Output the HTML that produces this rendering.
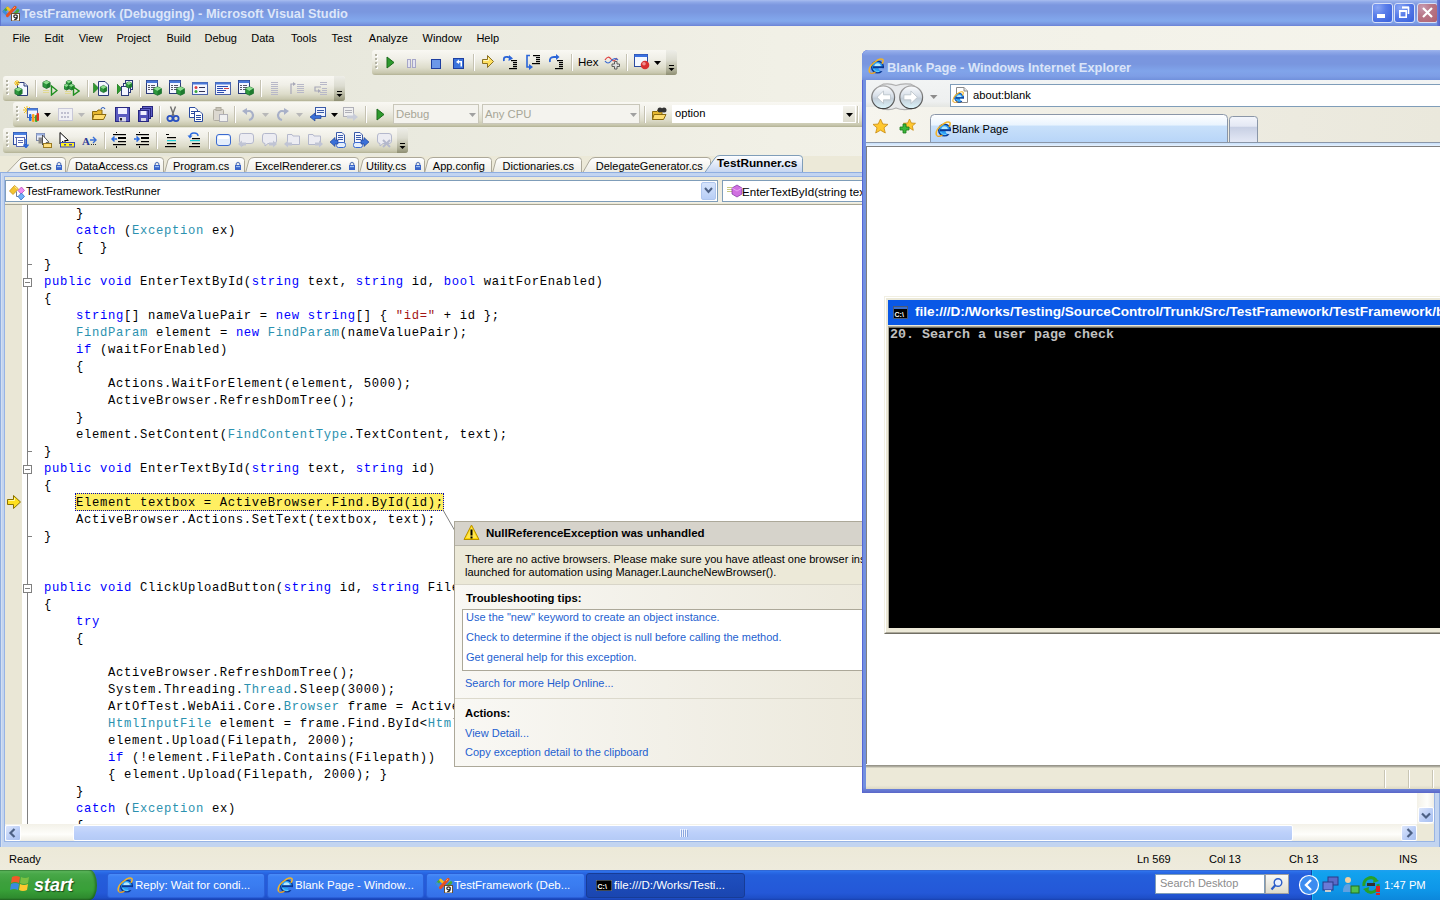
<!DOCTYPE html><html><head><meta charset="utf-8"><style>
*{box-sizing:border-box}
html,body{margin:0;padding:0}
body{width:1440px;height:900px;overflow:hidden;position:relative;background:#ECE9D8;font-family:"Liberation Sans",sans-serif;font-size:11px;color:#000}
.a{position:absolute}
.t{position:absolute;white-space:pre;line-height:1}
.k{color:#0000FF}.y{color:#2B91AF}.s{color:#A31515}
.tb{position:absolute;border-radius:3px;background:linear-gradient(#F9F8F3 0%,#F0EFE7 35%,#DDDCCA 72%,#C8C7AE 92%,#B2B194 100%)}
.grip{position:absolute;width:2px;height:15px;background:repeating-linear-gradient(#B4B3A4 0 2px,transparent 2px 4px);filter:drop-shadow(1px 1px 0 #fff)}
.code{position:absolute;white-space:pre;line-height:17px;font-family:"Liberation Mono",monospace;font-size:12.2px;letter-spacing:0.68px;color:#000}
.tab{position:absolute;font-size:11px;white-space:pre}
</style></head><body>
<div class="a" style="left:0px;top:0px;width:1440px;height:26px;background:linear-gradient(#A9BDEF 0px,#90A9E8 2px,#7C97DF 5px,#7A97DF 12px,#80A3E9 18px,#82A8EC 21px,#7896E0 24px,#6A82D6 26px)"></div>
<div class="a" style="left:0px;top:0px;width:1px;height:26px;background:#6079D2"></div>
<svg class="a" style="left:2px;top:3px;" width="18" height="18" viewBox="0 0 18 18"><g stroke-width="2.6" stroke-linecap="round" fill="none"><path d="M2 8.5 L5.5 5" stroke="#48A838"/><path d="M5.5 5 L9 8.5" stroke="#F8C020"/><path d="M2 8.5 L5.5 12" stroke="#3A8EE0"/><path d="M12.5 4 L16 7.5" stroke="#3AA0E8"/><path d="M16 7.5 L12.5 11" stroke="#48A838"/><path d="M5.5 12.5 L13 4.5" stroke="#E85020" stroke-width="3.2"/></g><path d="M11 6 L13 4" stroke="#FFA060" stroke-width="1"/><rect x="9.5" y="10.5" width="8" height="7.5" fill="#FFFFFF" stroke="#6A5030"/><path d="M15.2 13.3 Q15.2 11.8 13.5 11.8 Q11.8 11.8 11.8 13.3 Q11.8 14.8 13.5 14.8 Q14.6 14.8 15.2 14 Q15.2 16.8 12.2 16.6" stroke="#2A2A2A" stroke-width="1.3" fill="none"/></svg>
<div class="t" style="left:22px;top:7.5px;font-size:12.8px;font-weight:bold;color:#DDE6F9;letter-spacing:0px">TestFramework (Debugging) - Microsoft Visual Studio</div>
<div class="a" style="left:1372px;top:3px;width:21px;height:20px;border-radius:3px;border:1px solid #D8E0F8;background:radial-gradient(circle at 25% 20%,#8AA6F4 0,#5A7EEA 40%,#3F66DE 85%,#4A78E8 100%)"></div>
<div class="a" style="left:1377px;top:14px;width:8px;height:4px;background:#fff"></div>
<div class="a" style="left:1394px;top:3px;width:21px;height:20px;border-radius:3px;border:1px solid #D8E0F8;background:radial-gradient(circle at 25% 20%,#8AA6F4 0,#5A7EEA 40%,#3F66DE 85%,#4A78E8 100%)"></div>
<svg class="a" style="left:1398px;top:6px;" width="13" height="13" viewBox="0 0 13 13"><path d="M4 1.5 H10.5 V8" stroke="#fff" stroke-width="1.6" fill="none"/><rect x="4" y="0.5" width="7" height="2" fill="#fff"/><rect x="1.8" y="4.8" width="6.4" height="6.4" fill="none" stroke="#fff" stroke-width="1.6"/><rect x="1" y="4" width="8" height="2" fill="#fff"/></svg>
<div class="a" style="left:1417px;top:3px;width:21px;height:20px;border-radius:3px;border:1px solid #D8E0F8;background:radial-gradient(circle at 25% 20%,#C89AB0 0,#B87888 40%,#B06070 100%)"></div>
<svg class="a" style="left:1421px;top:6px;" width="13" height="13" viewBox="0 0 13 13"><path d="M2 2 L11 11 M11 2 L2 11" stroke="#fff" stroke-width="2.2"/></svg>
<div class="a" style="left:1437px;top:0px;width:3px;height:26px;background:linear-gradient(90deg,#6A7ED8,#5060C8)"></div>
<div class="a" style="left:0px;top:26px;width:1440px;height:130px;background:linear-gradient(90deg,#E2E2D5 0%,#E9E9DE 26%,#F1F0E6 54%,#F5F4EC 100%)"></div>
<div class="t" style="left:12.5px;top:33px;font-size:11px">File</div>
<div class="t" style="left:44.6px;top:33px;font-size:11px">Edit</div>
<div class="t" style="left:78.7px;top:33px;font-size:11px">View</div>
<div class="t" style="left:116.4px;top:33px;font-size:11px">Project</div>
<div class="t" style="left:166.4px;top:33px;font-size:11px">Build</div>
<div class="t" style="left:204.5px;top:33px;font-size:11px">Debug</div>
<div class="t" style="left:251.2px;top:33px;font-size:11px">Data</div>
<div class="t" style="left:291px;top:33px;font-size:11px">Tools</div>
<div class="t" style="left:331.6px;top:33px;font-size:11px">Test</div>
<div class="t" style="left:368.8px;top:33px;font-size:11px">Analyze</div>
<div class="t" style="left:422.6px;top:33px;font-size:11px">Window</div>
<div class="t" style="left:476.4px;top:33px;font-size:11px">Help</div>
<div class="tb" style="left:372px;top:50px;width:305px;height:25px"></div>
<div class="grip" style="left:375px;top:54px"></div>
<div class="a" style="left:666px;top:50px;width:11px;height:25px;border-radius:0 3px 3px 0;background:linear-gradient(#EDEDE7,#DCDCD0 40%,#B0B098 80%,#8E8E72)"></div>
<svg class="a" style="left:668px;top:65px" width="7" height="7"><rect x="1" y="0" width="5" height="1" fill="#000"/><path d="M0.5 3 H6.5 L3.5 6Z" fill="#000"/></svg>
<svg class="a" style="left:382px;top:54px" width="16" height="16" viewBox="0 0 16 16"><path d="M5 3 L12 8.5 L5 14 Z" fill="#2E9A2E" stroke="#1B6B1B" stroke-width="1"/></svg>
<svg class="a" style="left:404px;top:54px" width="16" height="16" viewBox="0 0 16 16"><rect x="3.5" y="5.5" width="3" height="8" fill="#E4E4F0" stroke="#A6A6C8"/><rect x="8.5" y="5.5" width="3" height="8" fill="#E4E4F0" stroke="#A6A6C8"/></svg>
<svg class="a" style="left:428px;top:54px" width="16" height="16" viewBox="0 0 16 16"><rect x="3.5" y="5.5" width="9" height="9" fill="#6C98E8" stroke="#1E3FA0"/></svg>
<svg class="a" style="left:451px;top:54px" width="16" height="16" viewBox="0 0 16 16"><rect x="2.5" y="4.5" width="10" height="10" fill="#3C74DC" stroke="#1E3FA0"/><path d="M5 8 L8 5.5 L8 7 L11 7 L11 12.5 L9.5 12.5 L9.5 8.5 L8 8.5 L8 10 Z" fill="#fff"/></svg>
<div class="a" style="left:473px;top:54px;width:1px;height:17px;background:#C5C2B2"></div>
<div class="a" style="left:474px;top:54px;width:1px;height:17px;background:#FFFFFF"></div>
<svg class="a" style="left:480px;top:54px" width="16" height="16" viewBox="0 0 16 16"><path d="M2.5 5.5 H7.5 V1.5 L13.5 7.5 L7.5 13.5 V9.5 H2.5Z" fill="#FFE060" stroke="#8A7020"/><path d="M3.5 6.5 H8.5 V4" stroke="#FFF8C0" fill="none"/></svg>
<svg class="a" style="left:502px;top:54px" width="16" height="16" viewBox="0 0 16 16"><path d="M2 7 Q1 2 6 3 L9 4" stroke="#2A64D8" stroke-width="1.8" fill="none"/><path d="M7 1 L11 4.5 L6.5 7Z" fill="#2A64D8"/><g fill="#000"><rect x="9" y="6" width="6" height="1.2"/><rect x="11" y="8" width="4" height="1.2"/><rect x="11" y="10" width="4" height="1.2"/><rect x="11" y="12" width="4" height="1.2"/><rect x="7" y="14" width="8" height="1.2"/></g></svg>
<svg class="a" style="left:525px;top:54px" width="16" height="16" viewBox="0 0 16 16"><path d="M5 1.5 H2 V13 H5" stroke="#2A64D8" stroke-width="1.6" fill="none"/><path d="M4 10 L8 13 L4 16Z" fill="#2A64D8"/><g fill="#000"><rect x="8" y="1" width="7" height="1.2"/><rect x="11" y="3" width="4" height="1.2"/><rect x="11" y="5" width="4" height="1.2"/><rect x="11" y="7" width="4" height="1.2"/><rect x="7" y="9" width="8" height="1.2"/></g></svg>
<svg class="a" style="left:548px;top:54px" width="16" height="16" viewBox="0 0 16 16"><path d="M2 8 Q1 3 6 3 H9" stroke="#2A64D8" stroke-width="1.8" fill="none"/><path d="M8 0 L11.5 3 L8 6Z" fill="#2A64D8"/><g fill="#000"><rect x="9" y="6" width="6" height="1.2"/><rect x="11" y="8" width="4" height="1.2"/><rect x="11" y="10" width="4" height="1.2"/><rect x="11" y="12" width="4" height="1.2"/><rect x="7" y="14" width="8" height="1.2"/></g></svg>
<div class="a" style="left:571px;top:54px;width:1px;height:17px;background:#C5C2B2"></div>
<div class="a" style="left:572px;top:54px;width:1px;height:17px;background:#FFFFFF"></div>
<div class="t" style="left:578px;top:57px;font-size:11.5px">Hex</div>
<svg class="a" style="left:604px;top:54px" width="16" height="16" viewBox="0 0 16 16"><path d="M1 6 Q4 1 7 5 Q10 9 13 4" stroke="#E04040" stroke-width="1.2" fill="none"/><path d="M1 7 Q4 11 7 7 Q10 3 14 6" stroke="#3A6AD0" stroke-width="1.2" fill="none"/><path d="M8 10 h2.5 v-2.5 h2.5 v2.5 h2.5 v2.5 h-2.5 v2.5 h-2.5 v-2.5 h-2.5z" fill="#E0E0E0" stroke="#505050" stroke-width=".9"/></svg>
<div class="a" style="left:626px;top:54px;width:1px;height:17px;background:#C5C2B2"></div>
<div class="a" style="left:627px;top:54px;width:1px;height:17px;background:#FFFFFF"></div>
<svg class="a" style="left:634px;top:54px" width="16" height="16" viewBox="0 0 16 16"><rect x="0.5" y="0.5" width="13" height="12" fill="#F4F8FF" stroke="#2A4AA0"/><rect x="0.5" y="0.5" width="13" height="2.5" fill="#3A70E0"/><circle cx="11" cy="11" r="4.3" fill="#D83030"/><circle cx="10" cy="9.8" r="1.8" fill="#F09090"/></svg>
<svg class="a" style="left:654px;top:61px" width="7" height="4"><path d="M0 0 H7 L3.5 4Z" fill="#000"/></svg>
<div class="tb" style="left:3px;top:76px;width:342px;height:25px"></div>
<div class="grip" style="left:6px;top:80px"></div>
<div class="a" style="left:334px;top:76px;width:11px;height:25px;border-radius:0 3px 3px 0;background:linear-gradient(#EDEDE7,#DCDCD0 40%,#B0B098 80%,#8E8E72)"></div>
<svg class="a" style="left:336px;top:91px" width="7" height="7"><rect x="1" y="0" width="5" height="1" fill="#000"/><path d="M0.5 3 H6.5 L3.5 6Z" fill="#000"/></svg>
<svg class="a" style="left:13px;top:80px" width="16" height="16" viewBox="0 0 16 16"><path d="M4.5 2.5 H11 L14.5 6 V15.5 H4.5 Z" fill="#F4F8FF" stroke="#2A3A78"/><path d="M11 2.5 V6 H14.5" fill="#DDE6F8" stroke="#2A3A78"/><g stroke="#F0C020" stroke-width="1"><path d="M4 0 V6 M1 3 H7 M2 1 L6 5 M6 1 L2 5"/></g><polygon points="5.5,7.5 9.1,9.3 9.1,13.7 5.5,15.5 1.9,13.7 1.9,9.3" fill="#2E9A3E" stroke="#17602A" stroke-width=".7"/><polygon points="1.9,9.3 5.5,7.5 9.1,9.3 5.5,11.5" fill="#8EDC8E"/><polygon points="5.5,11.5 9.1,9.3 9.1,13.7 5.5,15.5" fill="#1E7A2E"/></svg>
<div class="a" style="left:35px;top:80px;width:1px;height:17px;background:#C5C2B2"></div>
<div class="a" style="left:36px;top:80px;width:1px;height:17px;background:#FFFFFF"></div>
<svg class="a" style="left:42px;top:80px" width="16" height="16" viewBox="0 0 16 16"><polygon points="4.5,0.5 8.1,2.3 8.1,6.7 4.5,8.5 0.9,6.7 0.9,2.3" fill="#2E9A3E" stroke="#17602A" stroke-width=".7"/><polygon points="0.9,2.3 4.5,0.5 8.1,2.3 4.5,4.5" fill="#8EDC8E"/><polygon points="4.5,4.5 8.1,2.3 8.1,6.7 4.5,8.5" fill="#1E7A2E"/><g fill="#E0D890"><rect x="1" y="10" width="6" height="1"/><rect x="1" y="12" width="6" height="1"/></g><path d="M9.5 6 L15 10.5 L9.5 15Z" fill="none" stroke="#1F8F1F" stroke-width="1.4"/></svg>
<svg class="a" style="left:64px;top:80px" width="16" height="16" viewBox="0 0 16 16"><polygon points="5.0,0.2 7.7,1.6 7.7,4.9 5.0,6.2 2.3,4.9 2.3,1.6" fill="#2E9A3E" stroke="#17602A" stroke-width=".7"/><polygon points="2.3,1.6 5.0,0.2 7.7,1.6 5.0,3.2" fill="#8EDC8E"/><polygon points="5.0,3.2 7.7,1.6 7.7,4.9 5.0,6.2" fill="#1E7A2E"/><polygon points="2.5,4.0 5.2,5.3 5.2,8.7 2.5,10.0 -0.2,8.7 -0.2,5.3" fill="#2E9A3E" stroke="#17602A" stroke-width=".7"/><polygon points="-0.2,5.3 2.5,4.0 5.2,5.3 2.5,7.0" fill="#8EDC8E"/><polygon points="2.5,7.0 5.2,5.3 5.2,8.7 2.5,10.0" fill="#1E7A2E"/><polygon points="7.5,4.0 10.2,5.3 10.2,8.7 7.5,10.0 4.8,8.7 4.8,5.3" fill="#2E9A3E" stroke="#17602A" stroke-width=".7"/><polygon points="4.8,5.3 7.5,4.0 10.2,5.3 7.5,7.0" fill="#8EDC8E"/><polygon points="7.5,7.0 10.2,5.3 10.2,8.7 7.5,10.0" fill="#1E7A2E"/><g fill="#E0D890"><rect x="1" y="11" width="6" height="1"/><rect x="1" y="13" width="6" height="1"/></g><path d="M9.5 7 L15 11 L9.5 15Z" fill="none" stroke="#1F8F1F" stroke-width="1.4"/></svg>
<div class="a" style="left:87px;top:80px;width:1px;height:17px;background:#C5C2B2"></div>
<div class="a" style="left:88px;top:80px;width:1px;height:17px;background:#FFFFFF"></div>
<svg class="a" style="left:93px;top:80px" width="16" height="16" viewBox="0 0 16 16"><path d="M0.5 3 L5.5 8 L0.5 13Z" fill="#2E9A2E" stroke="#1B6B1B" stroke-width=".6"/><path d="M5.5 1.5 H12 L15.5 5 V15.5 H5.5Z" fill="#F4F6FF" stroke="#2A3A78"/><polygon points="10.5,5.4 13.7,7.0 13.7,11.0 10.5,12.6 7.3,11.0 7.3,7.0" fill="#2E9A3E" stroke="#17602A" stroke-width=".7"/><polygon points="7.3,7.0 10.5,5.4 13.7,7.0 10.5,9.0" fill="#8EDC8E"/><polygon points="10.5,9.0 13.7,7.0 13.7,11.0 10.5,12.6" fill="#1E7A2E"/></svg>
<svg class="a" style="left:117px;top:80px" width="16" height="16" viewBox="0 0 16 16"><path d="M0 4 L5 9 L0 14Z" fill="#2E9A2E" stroke="#1B6B1B" stroke-width=".6"/><rect x="8.5" y="0.5" width="7" height="9" fill="#F4F6FF" stroke="#2A3A78"/><rect x="6.5" y="3.5" width="7" height="9" fill="#F4F6FF" stroke="#2A3A78"/><rect x="4.5" y="6.5" width="7" height="9" fill="#F4F6FF" stroke="#2A3A78"/><polygon points="12.0,1.8 14.9,3.2 14.9,6.8 12.0,8.2 9.1,6.8 9.1,3.2" fill="#2E9A3E" stroke="#17602A" stroke-width=".7"/><polygon points="9.1,3.2 12.0,1.8 14.9,3.2 12.0,5.0" fill="#8EDC8E"/><polygon points="12.0,5.0 14.9,3.2 14.9,6.8 12.0,8.2" fill="#1E7A2E"/></svg>
<div class="a" style="left:139px;top:80px;width:1px;height:17px;background:#C5C2B2"></div>
<div class="a" style="left:140px;top:80px;width:1px;height:17px;background:#FFFFFF"></div>
<svg class="a" style="left:146px;top:80px" width="16" height="16" viewBox="0 0 16 16"><rect x="0.5" y="0.5" width="11" height="13" fill="#F4F6FF" stroke="#2A3A78"/><rect x="0.5" y="0.5" width="11" height="2.5" fill="#4A78D8"/><g fill="#556"><rect x="2" y="5" width="2" height="1"/><rect x="5" y="5" width="4" height="1"/><rect x="2" y="7" width="2" height="1"/><rect x="5" y="7" width="4" height="1"/><rect x="2" y="9" width="2" height="1"/><rect x="5" y="9" width="3" height="1"/></g><polygon points="11.5,6.7 15.4,8.6 15.4,13.4 11.5,15.3 7.6,13.4 7.6,8.6" fill="#2E9A3E" stroke="#17602A" stroke-width=".7"/><polygon points="7.6,8.6 11.5,6.7 15.4,8.6 11.5,11.0" fill="#8EDC8E"/><polygon points="11.5,11.0 15.4,8.6 15.4,13.4 11.5,15.3" fill="#1E7A2E"/></svg>
<svg class="a" style="left:169px;top:80px" width="16" height="16" viewBox="0 0 16 16"><rect x="0.5" y="0.5" width="11" height="13" fill="#F4F6FF" stroke="#2A3A78"/><rect x="0.5" y="0.5" width="11" height="2.5" fill="#4A78D8"/><g fill="#556"><rect x="2" y="5" width="2" height="1"/><rect x="5" y="5" width="4" height="1"/><rect x="2" y="7" width="2" height="1"/><rect x="5" y="7" width="4" height="1"/><rect x="2" y="9" width="2" height="1"/><rect x="5" y="9" width="3" height="1"/></g><polygon points="11.5,6.7 15.4,8.6 15.4,13.4 11.5,15.3 7.6,13.4 7.6,8.6" fill="#2E9A3E" stroke="#17602A" stroke-width=".7"/><polygon points="7.6,8.6 11.5,6.7 15.4,8.6 11.5,11.0" fill="#8EDC8E"/><polygon points="11.5,11.0 15.4,8.6 15.4,13.4 11.5,15.3" fill="#1E7A2E"/></svg>
<svg class="a" style="left:192px;top:80px" width="16" height="16" viewBox="0 0 16 16"><rect x="0.5" y="2.5" width="15" height="12" fill="#F4F6FF" stroke="#4A62A8"/><rect x="0.5" y="2.5" width="15" height="2" fill="#4A78D8"/><circle cx="4" cy="7.5" r="1.5" fill="#E04040"/><circle cx="4" cy="11.5" r="1.5" fill="#3DAA3D"/><rect x="7" y="7" width="6" height="1" fill="#335"/><rect x="7" y="11" width="6" height="1" fill="#335"/></svg>
<svg class="a" style="left:215px;top:80px" width="16" height="16" viewBox="0 0 16 16"><rect x="0.5" y="2.5" width="15" height="12" fill="#F4F6FF" stroke="#4A62A8"/><rect x="0.5" y="2.5" width="15" height="2" fill="#4A78D8"/><g fill="#2A4AB0"><rect x="2" y="6" width="11" height="1"/><rect x="2" y="8" width="6" height="1"/><rect x="9" y="8" width="5" height="1" fill="#D04040"/><rect x="2" y="10" width="9" height="1"/><rect x="2" y="12" width="7" height="1"/></g></svg>
<svg class="a" style="left:238px;top:80px" width="16" height="16" viewBox="0 0 16 16"><rect x="0.5" y="0.5" width="11" height="13" fill="#F4F6FF" stroke="#2A3A78"/><rect x="0.5" y="0.5" width="11" height="2.5" fill="#4A78D8"/><g fill="#556"><rect x="2" y="5" width="2" height="1"/><rect x="5" y="5" width="4" height="1"/><rect x="2" y="7" width="2" height="1"/><rect x="5" y="7" width="4" height="1"/><rect x="2" y="9" width="2" height="1"/><rect x="5" y="9" width="3" height="1"/></g><polygon points="11.5,6.7 15.4,8.6 15.4,13.4 11.5,15.3 7.6,13.4 7.6,8.6" fill="#2E9A3E" stroke="#17602A" stroke-width=".7"/><polygon points="7.6,8.6 11.5,6.7 15.4,8.6 11.5,11.0" fill="#8EDC8E"/><polygon points="11.5,11.0 15.4,8.6 15.4,13.4 11.5,15.3" fill="#1E7A2E"/></svg>
<div class="a" style="left:260px;top:80px;width:1px;height:17px;background:#C5C2B2"></div>
<div class="a" style="left:261px;top:80px;width:1px;height:17px;background:#FFFFFF"></div>
<svg class="a" style="left:267px;top:80px" width="16" height="16" viewBox="0 0 16 16"><g fill="#B8B8C8"><rect x="4" y="2" width="7" height="1"/><rect x="4" y="4" width="7" height="1"/><rect x="4" y="6" width="7" height="1"/><rect x="4" y="8" width="7" height="1"/><rect x="4" y="10" width="7" height="1"/><rect x="4" y="12" width="7" height="1"/><rect x="4" y="14" width="7" height="1"/></g></svg>
<svg class="a" style="left:289px;top:80px" width="16" height="16" viewBox="0 0 16 16"><path d="M2 14 V4 H5" stroke="#A8A8B8" stroke-width="1.2" fill="none"/><path d="M4 2 L7 4 L4 6" fill="#A8A8B8"/><g fill="#B8B8C8"><rect x="8" y="4" width="7" height="1"/><rect x="8" y="6" width="7" height="1"/><rect x="8" y="8" width="7" height="1"/><rect x="8" y="10" width="7" height="1"/><rect x="8" y="12" width="7" height="1"/></g></svg>
<svg class="a" style="left:312px;top:80px" width="16" height="16" viewBox="0 0 16 16"><path d="M9 7 H3 V11 H7" stroke="#A8A8B8" stroke-width="1.2" fill="none"/><path d="M6 9 L9 11 L6 13" fill="#A8A8B8"/><g fill="#B8B8C8"><rect x="8" y="2" width="7" height="1"/><rect x="8" y="4" width="7" height="1"/><rect x="10" y="8" width="5" height="1"/><rect x="10" y="10" width="5" height="1"/><rect x="8" y="12" width="7" height="1"/><rect x="8" y="14" width="7" height="1"/></g></svg>
<div class="tb" style="left:13px;top:102px;width:855px;height:25px;border-radius:3px 0 0 3px"></div>
<div class="grip" style="left:16px;top:106px"></div>
<svg class="a" style="left:23px;top:106px" width="16" height="16" viewBox="0 0 16 16"><g stroke="#F0C020" stroke-width="1"><path d="M4 0 V8 M0 4 H8 M1 1 L7 7 M7 1 L1 7"/></g><rect x="4.5" y="2.5" width="10" height="9" fill="#F0F4FF" stroke="#4A62A8"/><rect x="4.5" y="2.5" width="10" height="2" fill="#4A80E0"/><rect x="6" y="8" width="2.5" height="7" rx="1" fill="#2A70E0"/><rect x="9" y="8" width="2.5" height="8" rx="1" fill="#F8A020"/><rect x="12" y="9" width="2.5" height="7" rx="1" fill="#30B030"/><rect x="13.5" y="7" width="2.5" height="8" rx="1" fill="#E03020"/></svg>
<svg class="a" style="left:44px;top:113px" width="7" height="4"><path d="M0 0 H7 L3.5 4Z" fill="#000"/></svg>
<svg class="a" style="left:57px;top:106px" width="16" height="16" viewBox="0 0 16 16"><rect x="1.5" y="2.5" width="14" height="12" fill="#F0F0F4" stroke="#C8C8D8"/><g fill="#C0C0D0"><rect x="4" y="6" width="2" height="2"/><rect x="7" y="6" width="2" height="2"/><rect x="10" y="6" width="2" height="2"/><rect x="4" y="10" width="2" height="2"/><rect x="7" y="10" width="2" height="2"/><rect x="10" y="10" width="2" height="2"/></g></svg>
<svg class="a" style="left:78px;top:113px" width="7" height="4"><path d="M0 0 H7 L3.5 4Z" fill="#B8B8B8"/></svg>
<svg class="a" style="left:91px;top:106px" width="16" height="16" viewBox="0 0 16 16"><path d="M1.5 5.5 H6 L7 4 H11 V13.5 H1.5Z" fill="#E8B830" stroke="#8A6A10"/><path d="M3 8.5 H15 L12.5 13.5 H1.5Z" fill="#FFDD70" stroke="#8A6A10"/><path d="M10 3 Q12 0 14 3" stroke="#3060C0" stroke-width="1.2" fill="none"/></svg>
<svg class="a" style="left:114px;top:106px" width="16" height="16" viewBox="0 0 16 16"><rect x="1.5" y="1.5" width="14" height="14" fill="#5A5AC0" stroke="#282880"/><rect x="4" y="2" width="9" height="6" fill="#F0F0FF"/><rect x="5" y="11" width="7" height="4.5" fill="#D8D8E8"/><rect x="6" y="12" width="2" height="2.5" fill="#223"/></svg>
<svg class="a" style="left:137px;top:106px" width="16" height="16" viewBox="0 0 16 16"><rect x="5.5" y="0.5" width="10" height="10" fill="#6060C8" stroke="#282880"/><rect x="3.5" y="2.5" width="10" height="10" fill="#6060C8" stroke="#282880"/><rect x="1.5" y="4.5" width="10" height="11" fill="#5050B8" stroke="#282880"/><rect x="3.5" y="5" width="6" height="4" fill="#F0F0FF"/><rect x="4" y="12" width="5" height="3" fill="#D8D8E8"/></svg>
<div class="a" style="left:159px;top:106px;width:1px;height:17px;background:#C5C2B2"></div>
<div class="a" style="left:160px;top:106px;width:1px;height:17px;background:#FFFFFF"></div>
<svg class="a" style="left:165px;top:106px" width="16" height="16" viewBox="0 0 16 16"><path d="M5.5 0.5 L9 10 M10.5 0.5 L7 10" stroke="#707070" stroke-width="1.4"/><circle cx="5" cy="12.5" r="2.6" fill="none" stroke="#2850C0" stroke-width="1.8"/><circle cx="11" cy="12.5" r="2.6" fill="none" stroke="#2850C0" stroke-width="1.8"/></svg>
<svg class="a" style="left:188px;top:106px" width="16" height="16" viewBox="0 0 16 16"><path d="M1.5 1.5 H7 L9.5 4 V11.5 H1.5Z" fill="#fff" stroke="#2A4AA0"/><path d="M6.5 5.5 H12 L14.5 8 V15.5 H6.5Z" fill="#fff" stroke="#2A4AA0"/><g fill="#2A4AA0"><rect x="3" y="5" width="4" height="1"/><rect x="3" y="7" width="3" height="1"/><rect x="8" y="9" width="5" height="1"/><rect x="8" y="11" width="5" height="1"/><rect x="8" y="13" width="5" height="1"/></g></svg>
<svg class="a" style="left:212px;top:106px" width="16" height="16" viewBox="0 0 16 16"><rect x="1.5" y="3.5" width="10" height="11" rx="1" fill="#DCD8D0" stroke="#B0ACA0"/><rect x="4" y="1.5" width="5" height="3" fill="#C8C4B8" stroke="#B0ACA0"/><rect x="7.5" y="8.5" width="8" height="7" fill="#F0F0F0" stroke="#B0B0B8"/></svg>
<div class="a" style="left:234px;top:106px;width:1px;height:17px;background:#C5C2B2"></div>
<div class="a" style="left:235px;top:106px;width:1px;height:17px;background:#FFFFFF"></div>
<svg class="a" style="left:241px;top:106px" width="16" height="16" viewBox="0 0 16 16"><path d="M4 6 Q11 3 12 9 Q12 13 8 14" stroke="#A8B0C8" stroke-width="2.2" fill="none"/><path d="M1 5 L6 2 L6 9Z" fill="#A8B0C8"/></svg>
<svg class="a" style="left:262px;top:113px" width="7" height="4"><path d="M0 0 H7 L3.5 4Z" fill="#B8B8B8"/></svg>
<svg class="a" style="left:274px;top:106px" width="16" height="16" viewBox="0 0 16 16"><path d="M12 6 Q5 3 4 9 Q4 13 8 14" stroke="#A8B0C8" stroke-width="2.2" fill="none"/><path d="M15 5 L10 2 L10 9Z" fill="#A8B0C8"/></svg>
<svg class="a" style="left:296px;top:113px" width="7" height="4"><path d="M0 0 H7 L3.5 4Z" fill="#B8B8B8"/></svg>
<svg class="a" style="left:310px;top:106px" width="16" height="16" viewBox="0 0 16 16"><rect x="5.5" y="1.5" width="10" height="9" fill="#F0F4FF" stroke="#3A5AA8"/><g fill="#3A5AA8"><rect x="7" y="4" width="7" height="1"/><rect x="7" y="6" width="7" height="1"/></g><path d="M0 11 L5 7 L5 9.5 H11 V12.5 H5 V15Z" fill="#3A70D8" stroke="#1A3A90" stroke-width=".6"/></svg>
<svg class="a" style="left:331px;top:113px" width="7" height="4"><path d="M0 0 H7 L3.5 4Z" fill="#000"/></svg>
<svg class="a" style="left:342px;top:106px" width="16" height="16" viewBox="0 0 16 16"><rect x="1.5" y="1.5" width="10" height="9" fill="#F0F0F0" stroke="#B0B0B8"/><g fill="#B0B0B8"><rect x="3" y="4" width="7" height="1"/><rect x="3" y="6" width="7" height="1"/></g><path d="M16 11 L11 7 L11 9.5 H5 V12.5 H11 V15Z" fill="#C8CCD8"/></svg>
<div class="a" style="left:365px;top:106px;width:1px;height:17px;background:#C5C2B2"></div>
<div class="a" style="left:366px;top:106px;width:1px;height:17px;background:#FFFFFF"></div>
<svg class="a" style="left:372px;top:106px" width="16" height="16" viewBox="0 0 16 16"><path d="M5 3 L12 8.5 L5 14 Z" fill="#2E9A2E" stroke="#1B6B1B" stroke-width="1"/></svg>
<div class="a" style="left:393px;top:104px;width:86px;height:20px;background:#F4F3EE;border:1px solid #C9C7BA"></div>
<div class="t" style="left:396px;top:109px;font-size:11.3px;color:#A7A697">Debug</div>
<svg class="a" style="left:469px;top:113px" width="7" height="4"><path d="M0 0 H7 L3.5 4Z" fill="#A0A0A0"/></svg>
<div class="a" style="left:482px;top:104px;width:158px;height:20px;background:#F4F3EE;border:1px solid #C9C7BA"></div>
<div class="t" style="left:485px;top:109px;font-size:11.3px;color:#A7A697">Any CPU</div>
<svg class="a" style="left:630px;top:113px" width="7" height="4"><path d="M0 0 H7 L3.5 4Z" fill="#A0A0A0"/></svg>
<div class="a" style="left:644px;top:106px;width:1px;height:17px;background:#C5C2B2"></div>
<div class="a" style="left:645px;top:106px;width:1px;height:17px;background:#FFFFFF"></div>
<svg class="a" style="left:651px;top:106px" width="16" height="16" viewBox="0 0 16 16"><path d="M1.5 5.5 H6 L7 4 H11 V13.5 H1.5Z" fill="#E8B830" stroke="#8A6A10"/><path d="M3 8.5 H15 L12.5 13.5 H1.5Z" fill="#FFDD70" stroke="#8A6A10"/><circle cx="9" cy="4" r="2.5" fill="#333"/><circle cx="13" cy="4" r="2.5" fill="#333"/></svg>
<div class="a" style="left:672px;top:105px;width:184px;height:18px;background:#fff"></div>
<div class="t" style="left:675px;top:108px;font-size:11.2px">option</div>
<div class="a" style="left:843px;top:106px;width:12px;height:16px;background:linear-gradient(#F3F2EC,#DCDACC)"></div>
<svg class="a" style="left:846px;top:113px" width="7" height="4"><path d="M0 0 H7 L3.5 4Z" fill="#000"/></svg>
<div class="a" style="left:857px;top:106px;width:1px;height:17px;background:#C5C2B2"></div>
<div class="a" style="left:858px;top:106px;width:1px;height:17px;background:#FFFFFF"></div>
<div class="tb" style="left:3px;top:128px;width:405px;height:25px"></div>
<div class="grip" style="left:6px;top:132px"></div>
<div class="a" style="left:397px;top:128px;width:11px;height:25px;border-radius:0 3px 3px 0;background:linear-gradient(#EDEDE7,#DCDCD0 40%,#B0B098 80%,#8E8E72)"></div>
<svg class="a" style="left:399px;top:143px" width="7" height="7"><rect x="1" y="0" width="5" height="1" fill="#000"/><path d="M0.5 3 H6.5 L3.5 6Z" fill="#000"/></svg>
<svg class="a" style="left:13px;top:132px" width="16" height="16" viewBox="0 0 16 16"><rect x="0.5" y="0.5" width="13" height="12" fill="#F4F6FF" stroke="#2A4AA0"/><rect x="0.5" y="0.5" width="13" height="2.5" fill="#4A80E0"/><rect x="3.5" y="5.5" width="8" height="9" fill="#fff" stroke="#5A6AB0"/><g fill="#5A6AB0"><rect x="2" y="5" width="3" height="1"/><rect x="5" y="8" width="5" height="1"/><rect x="5" y="10" width="5" height="1"/></g><path d="M13 7 V15 M10.5 12.5 L13 15.5 L15.5 12.5" stroke="#2A64D8" stroke-width="1.5" fill="none"/></svg>
<svg class="a" style="left:36px;top:132px" width="16" height="16" viewBox="0 0 16 16"><rect x="0.5" y="1.5" width="8" height="7" fill="#E8ECF8" stroke="#7A86A8"/><rect x="0.5" y="1.5" width="8" height="2" fill="#9AB0E0"/><rect x="2.5" y="5.5" width="5" height="6" fill="#888"/><path d="M6.5 3 L6.5 13 L8.5 11 L10.5 14.5 L12 13.8 L10.2 10.5 L13 10.3Z" fill="#fff" stroke="#333" stroke-width=".8"/><rect x="7.5" y="11.5" width="8" height="4" fill="#FFE080" stroke="#9A7A20"/></svg>
<svg class="a" style="left:59px;top:132px" width="16" height="16" viewBox="0 0 16 16"><path d="M1 0.5 L1 12 L3.8 9.3 L6.2 14 L7.8 13.2 L5.6 8.6 L9.3 8.4Z" fill="#fff" stroke="#000" stroke-width="1"/><rect x="1.5" y="10.5" width="14" height="4.5" fill="#FFF020" stroke="#3A4AB8"/><rect x="5" y="12" width="2" height="1.5" fill="#3A4AB8"/><rect x="10" y="12" width="3" height="1.5" fill="#3A4AB8"/></svg>
<svg class="a" style="left:82px;top:132px" width="16" height="16" viewBox="0 0 16 16"><text x="0" y="13" font-family="Liberation Serif" font-weight="bold" font-size="11" fill="#2A3A98">A</text><path d="M8 8 H14 M11 5 L14 8 L11 11" stroke="#3A70D8" stroke-width="1.4" fill="none"/><g fill="#333"><rect x="9" y="12" width="1" height="1"/><rect x="11" y="12" width="1" height="1"/><rect x="13" y="12" width="1" height="1"/></g></svg>
<div class="a" style="left:104px;top:132px;width:1px;height:17px;background:#C5C2B2"></div>
<div class="a" style="left:105px;top:132px;width:1px;height:17px;background:#FFFFFF"></div>
<svg class="a" style="left:111px;top:132px" width="16" height="16" viewBox="0 0 16 16"><g fill="#000"><rect x="2" y="2" width="13" height="1.2"/><rect x="7" y="5" width="8" height="2"/><rect x="7" y="9" width="8" height="1.2"/><rect x="2" y="12" width="13" height="1.2"/><rect x="5" y="0" width="1" height="1"/><rect x="5" y="14" width="1" height="2"/></g><path d="M1 7 H6 M3.5 4.5 L1 7 L3.5 9.5" stroke="#2A6AE0" stroke-width="1.5" fill="none"/></svg>
<svg class="a" style="left:134px;top:132px" width="16" height="16" viewBox="0 0 16 16"><g fill="#000"><rect x="2" y="2" width="13" height="1.2"/><rect x="7" y="5" width="8" height="2"/><rect x="7" y="9" width="8" height="1.2"/><rect x="2" y="12" width="13" height="1.2"/><rect x="5" y="0" width="1" height="1"/><rect x="5" y="14" width="1" height="2"/></g><path d="M0 7 H5 M2.5 4.5 L5 7 L2.5 9.5" stroke="#2A6AE0" stroke-width="1.5" fill="none"/></svg>
<div class="a" style="left:156px;top:132px;width:1px;height:17px;background:#C5C2B2"></div>
<div class="a" style="left:157px;top:132px;width:1px;height:17px;background:#FFFFFF"></div>
<svg class="a" style="left:163px;top:132px" width="16" height="16" viewBox="0 0 16 16"><g fill="#000"><rect x="3" y="2" width="3" height="1"/><rect x="4" y="5" width="9" height="1.2"/><rect x="4" y="8" width="9" height="1.2" fill="#20D0D8"/><rect x="4" y="11" width="9" height="1.2"/><rect x="2" y="14" width="11" height="1.2"/></g></svg>
<svg class="a" style="left:186px;top:132px" width="16" height="16" viewBox="0 0 16 16"><path d="M4 5 Q4 1 8 1 Q12 1 12 4" stroke="#2A6AE0" stroke-width="1.4" fill="none"/><path d="M1.5 3.5 L4 6.5 L6.5 3.5Z" fill="#2A6AE0"/><g fill="#000"><rect x="6" y="6" width="8" height="1.2"/><rect x="4" y="8" width="10" height="1.2" fill="#20D0D8"/><rect x="6" y="11" width="8" height="1.2"/><rect x="3" y="14" width="11" height="1.2"/></g></svg>
<div class="a" style="left:208px;top:132px;width:1px;height:17px;background:#C5C2B2"></div>
<div class="a" style="left:209px;top:132px;width:1px;height:17px;background:#FFFFFF"></div>
<svg class="a" style="left:215px;top:132px" width="16" height="16" viewBox="0 0 16 16"><rect x="1.5" y="2.5" width="14" height="11" rx="2.5" fill="#E4EEFC" stroke="#3A6AD0"/><rect x="3" y="4" width="11" height="3" rx="1" fill="#fff"/></svg>
<svg class="a" style="left:238px;top:132px" width="16" height="16" viewBox="0 0 16 16"><path d="M3.5 1.5 H13 Q15.5 1.5 15.5 4 V9 Q15.5 11.5 13 11.5 H7 L4 14 V11.5 Q1.5 11.5 1.5 9 V4 Q1.5 1.5 3.5 1.5Z" fill="#ECECF2" stroke="#B4B8CC"/><path d="M0 12 L4 8.5 V10.5 H8 V13.5 H4 V15.5Z" fill="#C0C4D4"/></svg>
<svg class="a" style="left:261px;top:132px" width="16" height="16" viewBox="0 0 16 16"><path d="M3.5 1.5 H13 Q15.5 1.5 15.5 4 V9 Q15.5 11.5 13 11.5 H7 L4 14 V11.5 Q1.5 11.5 1.5 9 V4 Q1.5 1.5 3.5 1.5Z" fill="#ECECF2" stroke="#B4B8CC"/><path d="M16 12 L12 8.5 V10.5 H8 V13.5 H12 V15.5Z" fill="#C0C4D4"/></svg>
<svg class="a" style="left:284px;top:132px" width="16" height="16" viewBox="0 0 16 16"><path d="M3.5 2.5 H8 L9 4 H15.5 V12.5 H3.5Z" fill="#ECECF2" stroke="#B4B8CC"/><path d="M0 12 L4 8.5 V10.5 H8 V13.5 H4 V15.5Z" fill="#C0C4D4"/></svg>
<svg class="a" style="left:307px;top:132px" width="16" height="16" viewBox="0 0 16 16"><path d="M1.5 2.5 H6 L7 4 H13.5 V12.5 H1.5Z" fill="#ECECF2" stroke="#B4B8CC"/><path d="M16 12 L12 8.5 V10.5 H8 V13.5 H12 V15.5Z" fill="#C0C4D4"/></svg>
<svg class="a" style="left:330px;top:132px" width="16" height="16" viewBox="0 0 16 16"><path d="M6.5 0.5 H12 L14.5 3 V10.5 H6.5Z" fill="#F4F6FF" stroke="#3A5AA8"/><g fill="#3A5AA8"><rect x="8" y="3" width="5" height="1"/><rect x="8" y="5" width="5" height="1"/><rect x="8" y="7" width="5" height="1"/></g><rect x="6.5" y="10.5" width="9" height="5" rx="2" fill="#E4EEFC" stroke="#3A6AD0"/><path d="M0 10 L5 5.5 V8 H8 V12 H5 V14.5Z" fill="#3A70D8" stroke="#1A3A90" stroke-width=".6"/></svg>
<svg class="a" style="left:353px;top:132px" width="16" height="16" viewBox="0 0 16 16"><path d="M1.5 0.5 H7 L9.5 3 V10.5 H1.5Z" fill="#F4F6FF" stroke="#3A5AA8"/><g fill="#3A5AA8"><rect x="3" y="3" width="5" height="1"/><rect x="3" y="5" width="5" height="1"/><rect x="3" y="7" width="5" height="1"/></g><rect x="0.5" y="10.5" width="9" height="5" rx="2" fill="#E4EEFC" stroke="#3A6AD0"/><path d="M16 10 L11 5.5 V8 H8 V12 H11 V14.5Z" fill="#3A70D8" stroke="#1A3A90" stroke-width=".6"/></svg>
<svg class="a" style="left:376px;top:132px" width="16" height="16" viewBox="0 0 16 16"><path d="M3.5 1.5 H13 Q15.5 1.5 15.5 4 V9 Q15.5 11.5 13 11.5 H7 L4 14 V11.5 Q1.5 11.5 1.5 9 V4 Q1.5 1.5 3.5 1.5Z" fill="#ECECF2" stroke="#B4B8CC"/><path d="M7 8 L14 15 M14 8 L7 15" stroke="#B4B8CC" stroke-width="2"/></svg>
<svg width="0" height="0" style="position:absolute"><defs><linearGradient id="gA" x1="0" y1="0" x2="0" y2="1"><stop offset="0" stop-color="#FFFFFF"/><stop offset="1" stop-color="#C3D3F0"/></linearGradient><linearGradient id="gI" x1="0" y1="0" x2="0" y2="1"><stop offset="0" stop-color="#FFFFFF"/><stop offset="1" stop-color="#ECEBE3"/></linearGradient></defs></svg>
<svg class="a" style="left:6px;top:157px" width="61" height="17"><path d="M0.5 16 L13 3 Q15 0.5 18 0.5 H56 Q59.5 0.5 59.5 3.5 V16" fill="url(#gI)" stroke="#ACA899"/></svg>
<div class="t" style="left:19.6px;top:161px;font-size:11px">Get.cs</div>
<svg class="a" style="left:56px;top:161px;" width="6" height="9" viewBox="0 0 6 9"><path d="M1.2 4.5 V2.8 Q3 0 4.8 2.8 V4.5" stroke="#5A78B8" stroke-width="1.1" fill="none"/><rect x="0" y="4" width="6" height="5" fill="#3A64C8"/><rect x="1" y="5" width="4" height="1.2" fill="#9CC0F4"/></svg>
<svg class="a" style="left:66px;top:157px" width="99" height="17"><path d="M0.5 16 L4 3 Q6 0.5 9 0.5 H94 Q97.5 0.5 97.5 3.5 V16" fill="url(#gI)" stroke="#ACA899"/></svg>
<div class="t" style="left:75px;top:161px;font-size:11px">DataAccess.cs</div>
<svg class="a" style="left:154px;top:161px;" width="6" height="9" viewBox="0 0 6 9"><path d="M1.2 4.5 V2.8 Q3 0 4.8 2.8 V4.5" stroke="#5A78B8" stroke-width="1.1" fill="none"/><rect x="0" y="4" width="6" height="5" fill="#3A64C8"/><rect x="1" y="5" width="4" height="1.2" fill="#9CC0F4"/></svg>
<svg class="a" style="left:164px;top:157px" width="82" height="17"><path d="M0.5 16 L4 3 Q6 0.5 9 0.5 H77 Q80.5 0.5 80.5 3.5 V16" fill="url(#gI)" stroke="#ACA899"/></svg>
<div class="t" style="left:173px;top:161px;font-size:11px">Program.cs</div>
<svg class="a" style="left:235px;top:161px;" width="6" height="9" viewBox="0 0 6 9"><path d="M1.2 4.5 V2.8 Q3 0 4.8 2.8 V4.5" stroke="#5A78B8" stroke-width="1.1" fill="none"/><rect x="0" y="4" width="6" height="5" fill="#3A64C8"/><rect x="1" y="5" width="4" height="1.2" fill="#9CC0F4"/></svg>
<svg class="a" style="left:245px;top:157px" width="115" height="17"><path d="M0.5 16 L4 3 Q6 0.5 9 0.5 H110 Q113.5 0.5 113.5 3.5 V16" fill="url(#gI)" stroke="#ACA899"/></svg>
<div class="t" style="left:255px;top:161px;font-size:11px">ExcelRenderer.cs</div>
<svg class="a" style="left:349px;top:161px;" width="6" height="9" viewBox="0 0 6 9"><path d="M1.2 4.5 V2.8 Q3 0 4.8 2.8 V4.5" stroke="#5A78B8" stroke-width="1.1" fill="none"/><rect x="0" y="4" width="6" height="5" fill="#3A64C8"/><rect x="1" y="5" width="4" height="1.2" fill="#9CC0F4"/></svg>
<svg class="a" style="left:359px;top:157px" width="67" height="17"><path d="M0.5 16 L4 3 Q6 0.5 9 0.5 H62 Q65.5 0.5 65.5 3.5 V16" fill="url(#gI)" stroke="#ACA899"/></svg>
<div class="t" style="left:366px;top:161px;font-size:11px">Utility.cs</div>
<svg class="a" style="left:415px;top:161px;" width="6" height="9" viewBox="0 0 6 9"><path d="M1.2 4.5 V2.8 Q3 0 4.8 2.8 V4.5" stroke="#5A78B8" stroke-width="1.1" fill="none"/><rect x="0" y="4" width="6" height="5" fill="#3A64C8"/><rect x="1" y="5" width="4" height="1.2" fill="#9CC0F4"/></svg>
<svg class="a" style="left:424px;top:157px" width="69" height="17"><path d="M0.5 16 L4 3 Q6 0.5 9 0.5 H64 Q67.5 0.5 67.5 3.5 V16" fill="url(#gI)" stroke="#ACA899"/></svg>
<div class="t" style="left:432.8px;top:161px;font-size:11px">App.config</div>
<svg class="a" style="left:492px;top:157px" width="91" height="17"><path d="M0.5 16 L4 3 Q6 0.5 9 0.5 H86 Q89.5 0.5 89.5 3.5 V16" fill="url(#gI)" stroke="#ACA899"/></svg>
<div class="t" style="left:502.6px;top:161px;font-size:11px">Dictionaries.cs</div>
<svg class="a" style="left:582px;top:157px" width="130" height="17"><path d="M0.5 16 L8 3 Q10 0.5 13 0.5 H125 Q128.5 0.5 128.5 3.5 V16" fill="url(#gI)" stroke="#ACA899"/></svg>
<div class="t" style="left:595.8px;top:161px;font-size:11px">DelegateGenerator.cs</div>
<svg class="a" style="left:704px;top:155px" width="100" height="19"><path d="M0.5 18 L11 3 Q13 0.5 16 0.5 H95 Q98.5 0.5 98.5 3.5 V18" fill="url(#gA)" stroke="#7F9DB9"/></svg>
<div class="t" style="left:717px;top:158px;font-size:11.8px;font-weight:bold">TestRunner.cs</div>
<div class="a" style="left:0px;top:172px;width:1440px;height:676px;background:#C2D4F0;border:1px solid #8FAEE0"></div>
<div class="a" style="left:1px;top:173px;width:1px;height:674px;background:#D4DEF0"></div>
<div class="a" style="left:4px;top:176px;width:1431px;height:666px;background:#ECE9D8;border:1px solid #98B4E4"></div>
<div class="a" style="left:5px;top:177px;width:1429px;height:26px;background:linear-gradient(#ECE9D8,#F2F0E6)"></div>
<div class="a" style="left:5px;top:180px;width:713px;height:22px;background:#fff;border:1px solid #7F9DB9"></div>
<div class="a" style="left:701px;top:182px;width:15px;height:18px;background:linear-gradient(#D6E4FC,#B8CEF6);border:1px solid #AFC6EE;border-radius:2px"></div>
<svg class="a" style="left:704px;top:187px;" width="9" height="7" viewBox="0 0 9 7"><path d="M1 1 L4.5 5 L8 1" stroke="#4D6185" stroke-width="2" fill="none"/></svg>
<svg class="a" style="left:8px;top:182px;" width="18" height="18" viewBox="0 0 18 18"><path d="M1.5 9 L6.5 3.5 L10.5 7 L5 12.5Z" fill="#F4C430" stroke="#C89010" stroke-width=".8"/><path d="M6.5 4.5 L9.5 7" stroke="#FFF0A0" stroke-width="1"/><path d="M8.5 9.5 V14.5 H11" stroke="#607090" stroke-width=".9" fill="none"/><path d="M10 8.5 L13.5 5 L16.5 8.5 L13 12Z" fill="#F08CF0" stroke="#B040B0" stroke-width=".7"/><path d="M10 14.5 L13.5 11 L16.5 14.5 L13 18Z" fill="#70B0F8" stroke="#2860C0" stroke-width=".7"/></svg>
<div class="t" style="left:26px;top:186px;font-size:11px">TestFramework.TestRunner</div>
<div class="a" style="left:722px;top:180px;width:148px;height:22px;background:#fff;border:1px solid #7F9DB9;border-right:none"></div>
<svg class="a" style="left:727px;top:183px;" width="18" height="16" viewBox="0 0 18 16"><g fill="#C8C880"><rect x="0" y="4" width="5" height="1"/><rect x="0" y="6" width="5" height="1"/><rect x="0" y="8" width="5" height="1"/></g><path d="M5 5 L10 2 L15 5 L15 11 L10 14 L5 11Z" fill="#D070E0" stroke="#8030A0" stroke-width=".7"/><path d="M5 5 L10 8 L15 5" stroke="#F0B0F8" fill="none" stroke-width=".8"/></svg>
<div class="t" style="left:742px;top:186px;font-size:11.6px">EnterTextById(string text, string id)</div>
<div class="a" style="left:5px;top:203px;width:1412px;height:621px;background:#fff"></div>
<div class="a" style="left:5px;top:203px;width:1412px;height:2px;background:#ECE9D8"></div>
<div class="a" style="left:5px;top:204px;width:1412px;height:1px;background:#A8A594"></div>
<div class="a" style="left:5px;top:205px;width:17px;height:619px;background:#EAE7D6"></div>
<div class="a" style="left:27px;top:205px;width:1px;height:619px;background:#808080"></div>
<div class="a" style="left:28px;top:203px;width:1389px;height:621px;overflow:hidden">
<div class="a" style="left:47px;top:290px;width:369px;height:18px;background:#FFEF62;outline:1px dotted #0000C0;outline-offset:-1px"></div>
<div class="code" style="left:16px;top:3px">    }
    <span class="k">catch</span> (<span class="y">Exception</span> ex)
    {  }
}
<span class="k">public</span> <span class="k">void</span> EnterTextById(<span class="k">string</span> text, <span class="k">string</span> id, <span class="k">bool</span> waitForEnabled)
{
    <span class="k">string</span>[] nameValuePair = <span class="k">new</span> <span class="k">string</span>[] { <span class="s">&quot;id=&quot;</span> + id };
    <span class="y">FindParam</span> element = <span class="k">new</span> <span class="y">FindParam</span>(nameValuePair);
    <span class="k">if</span> (waitForEnabled)
    {
        Actions.WaitForElement(element, 5000);
        ActiveBrowser.RefreshDomTree();
    }
    element.SetContent(<span class="y">FindContentType</span>.TextContent, text);
}
<span class="k">public</span> <span class="k">void</span> EnterTextById(<span class="k">string</span> text, <span class="k">string</span> id)
{
    Element textbox = ActiveBrowser.Find.ById(id);
    ActiveBrowser.Actions.SetText(textbox, text);
}


<span class="k">public</span> <span class="k">void</span> ClickUploadButton(<span class="k">string</span> id, <span class="k">string</span> Filepath)
{
    <span class="k">try</span>
    {

        ActiveBrowser.RefreshDomTree();
        System.Threading.<span class="y">Thread</span>.Sleep(3000);
        ArtOfTest.WebAii.Core.<span class="y">Browser</span> frame = ActiveBrowser.Frames[0];
        <span class="y">HtmlInputFile</span> element = frame.Find.ById&lt;<span class="y">HtmlInputFile</span>&gt;(id);
        element.Upload(Filepath, 2000);
        <span class="k">if</span> (!element.FilePath.Contains(Filepath))
        { element.Upload(Filepath, 2000); }
    }
    <span class="k">catch</span> (<span class="y">Exception</span> ex)
    {</div>
</div>
<div class="a" style="left:23px;top:278px;width:9px;height:9px;background:#fff;border:1px solid #808080"></div>
<div class="a" style="left:25px;top:282px;width:5px;height:1px;background:#808080"></div>
<div class="a" style="left:23px;top:465px;width:9px;height:9px;background:#fff;border:1px solid #808080"></div>
<div class="a" style="left:25px;top:469px;width:5px;height:1px;background:#808080"></div>
<div class="a" style="left:23px;top:584px;width:9px;height:9px;background:#fff;border:1px solid #808080"></div>
<div class="a" style="left:25px;top:588px;width:5px;height:1px;background:#808080"></div>
<div class="a" style="left:27px;top:264px;width:5px;height:1px;background:#808080"></div>
<div class="a" style="left:27px;top:451px;width:5px;height:1px;background:#808080"></div>
<div class="a" style="left:27px;top:536px;width:5px;height:1px;background:#808080"></div>
<svg class="a" style="left:6px;top:494px;" width="16" height="16" viewBox="0 0 16 16"><path d="M1.5 5.5 H7.5 V1.5 L14.5 8 L7.5 14.5 V10.5 H1.5Z" fill="#FFE020" stroke="#8A7000"/><path d="M2.5 6.5 H8.5 V4" stroke="#FFF8A0" fill="none"/></svg>
<svg class="a" style="left:442px;top:509px;" width="14" height="23" viewBox="0 0 14 23"><path d="M1 1 L13 22" stroke="#808080" stroke-width="1"/></svg>
<div class="a" style="left:5px;top:824px;width:1412px;height:17px;background:linear-gradient(#F3F1E8,#FEFEFB 60%,#F0EEE5)"></div>
<div class="a" style="left:5px;top:825px;width:16px;height:16px;border-radius:2px;border:1px solid #fff;background:linear-gradient(135deg,#DCE6FC,#B8CCF6 60%,#A8C0F0)"></div>
<svg class="a" style="left:5px;top:825px;" width="16" height="16" viewBox="0 0 16 16"><path d="M9.5 4 L5.5 8 L9.5 12" stroke="#4D6185" stroke-width="2.2" fill="none"/></svg>
<div class="a" style="left:73px;top:825px;width:1220px;height:16px;border-radius:2px;border:1px solid #fff;background:linear-gradient(#CADAFC,#BCD0FA 50%,#B4CAF6)"></div>
<svg class="a" style="left:680px;top:829px;" width="8" height="8" viewBox="0 0 8 8"><g fill="#F0F4FF"><rect x="0" y="0" width="1" height="8"/><rect x="2" y="0" width="1" height="8"/><rect x="4" y="0" width="1" height="8"/><rect x="6" y="0" width="1" height="8"/></g><g fill="#8CA8E0"><rect x="1" y="1" width="1" height="8"/><rect x="3" y="1" width="1" height="8"/><rect x="5" y="1" width="1" height="8"/><rect x="7" y="1" width="1" height="8"/></g></svg>
<div class="a" style="left:1401px;top:825px;width:16px;height:16px;border-radius:2px;border:1px solid #fff;background:linear-gradient(135deg,#DCE6FC,#B8CCF6 60%,#A8C0F0)"></div>
<svg class="a" style="left:1401px;top:825px;" width="16" height="16" viewBox="0 0 16 16"><path d="M6.5 4 L10.5 8 L6.5 12" stroke="#4D6185" stroke-width="2.2" fill="none"/></svg>
<div class="a" style="left:1417px;top:203px;width:17px;height:621px;background:linear-gradient(90deg,#F3F1E8,#FEFEFB 60%,#F0EEE5)"></div>
<div class="a" style="left:1418px;top:807px;width:16px;height:16px;border-radius:2px;border:1px solid #fff;background:linear-gradient(135deg,#DCE6FC,#B8CCF6 60%,#A8C0F0)"></div>
<svg class="a" style="left:1418px;top:807px;" width="16" height="16" viewBox="0 0 16 16"><path d="M4 6.5 L8 10.5 L12 6.5" stroke="#4D6185" stroke-width="2.2" fill="none"/></svg>
<div class="a" style="left:1417px;top:824px;width:17px;height:17px;background:#ECE9D8"></div>
<div class="a" style="left:4px;top:841px;width:1431px;height:1px;background:#98B4E4"></div>
<div class="a" style="left:0px;top:847px;width:1440px;height:23px;background:linear-gradient(#ECE9D8,#EEEBDD)"></div>
<div class="t" style="left:9px;top:854px;font-size:11px">Ready</div>
<div class="t" style="left:1137px;top:854px;font-size:11px">Ln 569</div>
<div class="t" style="left:1209px;top:854px;font-size:11px">Col 13</div>
<div class="t" style="left:1289px;top:854px;font-size:11px">Ch 13</div>
<div class="t" style="left:1399px;top:854px;font-size:11px">INS</div>
<div class="a" style="left:0px;top:870px;width:1440px;height:30px;background:linear-gradient(#3A81F3 0,#2A6CE8 2px,#245EDB 5px,#2458D8 23px,#1E4FC8 28px,#1941B0 30px)"></div>
<div class="a" style="left:0px;top:870px;width:1440px;height:1px;background:#3168D5"></div>
<div class="a" style="left:0;top:870px;width:97px;height:30px;border-radius:0 7px 7px 0 / 0 15px 15px 0;background:linear-gradient(#2E7A2E 0,#5AB45A 1px,#48A848 4px,#3DA03D 12px,#38A038 20px,#2E8A2E 28px,#246A24 30px);box-shadow:inset -2px 0 2px rgba(0,40,0,.35)"></div>
<svg class="a" style="left:10px;top:874px;" width="22" height="21" viewBox="0 0 22 21"><path d="M2 3 Q6 1 10 3 L9 9 Q5 7 1 9Z" fill="#F05A28"/><path d="M11 3 Q15 5 19 3 L18 9 Q14 11 10 9Z" fill="#7BC043"/><path d="M1 10 Q5 8 9 10 L8 16 Q4 14 0 16Z" fill="#3A8AE0"/><path d="M10 10 Q14 12 18 10 L17 16 Q13 18 9 16Z" fill="#FDC82F"/></svg>
<div class="t" style="left:34px;top:876px;font-size:18px;font-weight:bold;font-style:italic;color:#fff;text-shadow:1px 1px 1px #1A4A1A">start</div>
<div class="a" style="left:107px;top:873px;width:158px;height:25px;border-radius:3px;background:linear-gradient(#4A8CF8 0,#3C80F4 3px,#3A7CF0 50%,#3470E8 100%);border:1px solid #2A60D8"></div>
<svg class="a" style="left:117px;top:877px" width="16" height="16" viewBox="0 0 16 16"><defs><mask id="iem117_877"><rect x="0" y="0" width="16" height="16" fill="#fff"/><path d="M10.5 10.2 H16 V14 L11.5 12.5Z" fill="#000"/></mask></defs><g mask="url(#iem117_877)"><circle cx="9.5" cy="9" r="5.9" fill="#2A9CF2" stroke="#0A3590" stroke-width="1.3"/><path d="M6.2 8.3 Q6.8 5.2 9.6 5.2 Q12.4 5.2 12.9 8.3Z" fill="#B4E8FF"/><rect x="5" y="8.3" width="10.5" height="1.9" fill="#0A3590"/><path d="M5.5 11 Q7 14 11 13.5" stroke="#6AD0FF" stroke-width="1" fill="none"/></g><path d="M1.8 14.6 Q-0.5 10.5 5.5 5 Q12 -0.5 14.6 1.4 Q16 2.8 13.8 5.8" stroke="#F2B428" stroke-width="1.5" fill="none"/><path d="M1.8 14.6 Q3.5 16.2 7.5 14.2" stroke="#E8A020" stroke-width="1.3" fill="none"/></svg>
<div class="t" style="left:135px;top:880px;font-size:11.5px;color:#fff">Reply: Wait for condi...</div>
<div class="a" style="left:267px;top:873px;width:157px;height:25px;border-radius:3px;background:linear-gradient(#4A8CF8 0,#3C80F4 3px,#3A7CF0 50%,#3470E8 100%);border:1px solid #2A60D8"></div>
<svg class="a" style="left:277px;top:877px" width="16" height="16" viewBox="0 0 16 16"><defs><mask id="iem277_877"><rect x="0" y="0" width="16" height="16" fill="#fff"/><path d="M10.5 10.2 H16 V14 L11.5 12.5Z" fill="#000"/></mask></defs><g mask="url(#iem277_877)"><circle cx="9.5" cy="9" r="5.9" fill="#2A9CF2" stroke="#0A3590" stroke-width="1.3"/><path d="M6.2 8.3 Q6.8 5.2 9.6 5.2 Q12.4 5.2 12.9 8.3Z" fill="#B4E8FF"/><rect x="5" y="8.3" width="10.5" height="1.9" fill="#0A3590"/><path d="M5.5 11 Q7 14 11 13.5" stroke="#6AD0FF" stroke-width="1" fill="none"/></g><path d="M1.8 14.6 Q-0.5 10.5 5.5 5 Q12 -0.5 14.6 1.4 Q16 2.8 13.8 5.8" stroke="#F2B428" stroke-width="1.5" fill="none"/><path d="M1.8 14.6 Q3.5 16.2 7.5 14.2" stroke="#E8A020" stroke-width="1.3" fill="none"/></svg>
<div class="t" style="left:295px;top:880px;font-size:11.5px;color:#fff">Blank Page - Window...</div>
<div class="a" style="left:426px;top:873px;width:159px;height:25px;border-radius:3px;background:linear-gradient(#4A8CF8 0,#3C80F4 3px,#3A7CF0 50%,#3470E8 100%);border:1px solid #2A60D8"></div>
<svg class="a" style="left:435px;top:875px;" width="18" height="18" viewBox="0 0 18 18"><g stroke-width="2.6" stroke-linecap="round" fill="none"><path d="M2 8.5 L5.5 5" stroke="#48A838"/><path d="M5.5 5 L9 8.5" stroke="#F8C020"/><path d="M2 8.5 L5.5 12" stroke="#3A8EE0"/><path d="M12.5 4 L16 7.5" stroke="#3AA0E8"/><path d="M16 7.5 L12.5 11" stroke="#48A838"/><path d="M5.5 12.5 L13 4.5" stroke="#E85020" stroke-width="3.2"/></g><path d="M11 6 L13 4" stroke="#FFA060" stroke-width="1"/><rect x="9.5" y="10.5" width="8" height="7.5" fill="#FFFFFF" stroke="#6A5030"/><path d="M15.2 13.3 Q15.2 11.8 13.5 11.8 Q11.8 11.8 11.8 13.3 Q11.8 14.8 13.5 14.8 Q14.6 14.8 15.2 14 Q15.2 16.8 12.2 16.6" stroke="#2A2A2A" stroke-width="1.3" fill="none"/></svg>
<div class="t" style="left:454px;top:880px;font-size:11.5px;color:#fff">TestFramework (Deb...</div>
<div class="a" style="left:586px;top:873px;width:159px;height:25px;border-radius:3px;background:linear-gradient(#1E4FBE,#1C4AB8 50%,#1A46B0);border:1px solid #173C96"></div>
<svg class="a" style="left:596px;top:880px;" width="16" height="11" viewBox="0 0 16 11"><rect x="0" y="0" width="16" height="11" fill="#000" stroke="#8090A0"/><text x="1.5" y="8.5" font-size="7" font-family="Liberation Sans" font-weight="bold" fill="#fff">C:\</text></svg>
<div class="t" style="left:614px;top:880px;font-size:11.5px;color:#fff">file:///D:/Works/Testi...</div>
<div class="a" style="left:1155px;top:874px;width:110px;height:20px;background:#fff;border:1px solid #7F9DB9"></div>
<div class="t" style="left:1160px;top:878px;font-size:11px;color:#8C8C8C">Search Desktop</div>
<div class="a" style="left:1265px;top:874px;width:24px;height:20px;background:linear-gradient(#F8F8F4,#DEDBCC);border:1px solid #A0A0A0"></div>
<svg class="a" style="left:1270px;top:877px;" width="14" height="14" viewBox="0 0 14 14"><circle cx="8" cy="5.5" r="3.8" fill="#E8F0FF" stroke="#2A5CC8" stroke-width="1.4"/><path d="M5.5 8 L1.5 12.5" stroke="#2A5CC8" stroke-width="2.2"/></svg>
<div class="a" style="left:1311px;top:870px;width:129px;height:30px;background:linear-gradient(#1EA0F0 0,#12A2EE 3px,#0E96E8 20px,#0C86DA 31px);border-left:1px solid #1042A8;box-shadow:inset 1px 0 0 #18B8F8"></div>
<svg class="a" style="left:1298px;top:874px;" width="22" height="22" viewBox="0 0 22 22"><circle cx="11" cy="11" r="9.5" fill="#3C8CF0" stroke="#fff" stroke-width="1.2"/><path d="M13 6 L8 11 L13 16" stroke="#fff" stroke-width="2.4" fill="none"/></svg>
<svg class="a" style="left:1322px;top:876px;" width="18" height="18" viewBox="0 0 18 18"><rect x="6" y="1" width="10" height="8" fill="#5A6AC8" stroke="#2A3A88"/><rect x="1" y="6" width="10" height="8" fill="#6A7AD8" stroke="#2A3A88"/><rect x="3" y="14" width="6" height="2" fill="#ccc"/></svg>
<svg class="a" style="left:1342px;top:876px;" width="18" height="18" viewBox="0 0 18 18"><circle cx="6" cy="4" r="3" fill="#F0D0A0"/><path d="M1 16 Q1 8 6 8 Q11 8 11 16Z" fill="#60A0E0"/><rect x="9" y="10" width="8" height="7" fill="#50C050" stroke="#207020"/></svg>
<svg class="a" style="left:1361px;top:875px;" width="22" height="20" viewBox="0 0 22 20"><path d="M3 11 A7 7 0 0 1 15 5" stroke="#28A028" stroke-width="3" fill="none"/><path d="M13 2 L18 6 L12 8Z" fill="#28A028"/><path d="M17 9 A7 7 0 0 1 5 15" stroke="#28A028" stroke-width="3" fill="none"/><path d="M7 18 L2 14 L8 12Z" fill="#28A028"/><rect x="6" y="8" width="8" height="3" fill="#303030"/><rect x="15" y="11" width="4" height="6" fill="#E02020"/><rect x="15" y="18" width="4" height="2" fill="#E02020"/></svg>
<div class="t" style="left:1384px;top:880px;font-size:11.2px;color:#fff">1:47 PM</div>
<div class="a" style="left:454px;top:521px;width:420px;height:246px;border:1px solid #ACA899;background:linear-gradient(90deg,#F9F8F4 0%,#F2F0E8 50%,#ECE9DC 100%)"></div>
<div class="a" style="left:455px;top:522px;width:418px;height:24px;background:#D6D3CB;border-bottom:1px solid #B8B5A8"></div>
<div class="a" style="left:455px;top:546px;width:418px;height:39px;background:#ECE9D8;border-bottom:1px solid #D8D5C8"></div>
<svg class="a" style="left:463px;top:524px;" width="17" height="17" viewBox="0 0 17 17"><path d="M8.5 1 L16 15.5 H1Z" fill="#FFD700" stroke="#B89000" stroke-width="1" stroke-linejoin="round"/><path d="M8.5 3 L14 14 H3Z" fill="#FFE650"/><rect x="7.5" y="5.5" width="2" height="6" fill="#000"/><rect x="7.5" y="12.5" width="2" height="2" fill="#000"/></svg>
<div class="t" style="left:486px;top:528px;font-size:11.5px;font-weight:bold">NullReferenceException was unhandled</div>
<div class="t" style="left:465px;top:554px;font-size:11px">There are no active browsers. Please make sure you have atleast one browser instance</div>
<div class="t" style="left:465px;top:567px;font-size:11px">launched for automation using Manager.LauncheNewBrowser().</div>
<div class="t" style="left:466px;top:593px;font-size:11.3px;font-weight:bold">Troubleshooting tips:</div>
<div class="a" style="left:462px;top:609px;width:412px;height:62px;background:#fff;border:1px solid #ACA899"></div>
<div class="t" style="left:466px;top:612px;font-size:11px;color:#1E5FD0">Use the "new" keyword to create an object instance.</div>
<div class="t" style="left:466px;top:632px;font-size:11px;color:#1E5FD0">Check to determine if the object is null before calling the method.</div>
<div class="t" style="left:466px;top:652px;font-size:11px;color:#1E5FD0">Get general help for this exception.</div>
<div class="t" style="left:465px;top:678px;font-size:11px;color:#1E5FD0">Search for more Help Online...</div>
<div class="a" style="left:455px;top:698px;width:418px;height:1px;background:#DCD9CC"></div>
<div class="t" style="left:465px;top:708px;font-size:11.3px;font-weight:bold">Actions:</div>
<div class="t" style="left:465px;top:728px;font-size:11px;color:#1E5FD0">View Detail...</div>
<div class="t" style="left:465px;top:747px;font-size:11px;color:#1E5FD0">Copy exception detail to the clipboard</div>
<div class="a" style="left:862px;top:50px;width:588px;height:743px;border-radius:6px 6px 0 0;box-shadow:inset 1px 1px 0 #5666D4;background:linear-gradient(#7290E0 0,#7290E0 737px,#5A66C8 743px);overflow:hidden">
<div class="a" style="left:0;top:0;width:100%;height:30px;background:linear-gradient(#A0B6EE 0,#8EA8E8 2px,#7A96DF 6px,#7996DF 14px,#80A4EA 21px,#7E9EE6 26px,#7090DC 30px)"></div>
</div>
<div class="a" style="left:866px;top:80px;width:574px;height:27px;background:linear-gradient(#F2F4F4,#EEF0F0 80%,#E4E6E2)"></div>
<svg class="a" style="left:930px;top:95px;" width="8" height="5" viewBox="0 0 8 5"><path d="M0 0 H7.5 L3.75 4Z" fill="#8C8C8C"/></svg>
<div class="a" style="left:950px;top:84px;width:490px;height:23px;background:#fff;border:1px solid #7F9DB9;border-right:none"></div>
<svg class="a" style="left:952px;top:86px;" width="18" height="18" viewBox="0 0 18 18"><path d="M4.5 1.5 H12 L15.5 5 V16.5 H4.5Z" fill="#fff" stroke="#8A8A8A"/><path d="M12 1.5 V5 H15.5" fill="#E8E8E8" stroke="#8A8A8A"/></svg>
<svg class="a" style="left:952px;top:91px" width="12" height="12" viewBox="0 0 16 16"><defs><mask id="iem952_91"><rect x="0" y="0" width="16" height="16" fill="#fff"/><path d="M10.5 10.2 H16 V14 L11.5 12.5Z" fill="#000"/></mask></defs><g mask="url(#iem952_91)"><circle cx="9.5" cy="9" r="5.9" fill="#2A9CF2" stroke="#0A3590" stroke-width="1.3"/><path d="M6.2 8.3 Q6.8 5.2 9.6 5.2 Q12.4 5.2 12.9 8.3Z" fill="#B4E8FF"/><rect x="5" y="8.3" width="10.5" height="1.9" fill="#0A3590"/><path d="M5.5 11 Q7 14 11 13.5" stroke="#6AD0FF" stroke-width="1" fill="none"/></g><path d="M1.8 14.6 Q-0.5 10.5 5.5 5 Q12 -0.5 14.6 1.4 Q16 2.8 13.8 5.8" stroke="#F2B428" stroke-width="1.5" fill="none"/><path d="M1.8 14.6 Q3.5 16.2 7.5 14.2" stroke="#E8A020" stroke-width="1.3" fill="none"/></svg>
<div class="t" style="left:973px;top:90px;font-size:11.2px">about:blank</div>
<div class="a" style="left:866px;top:107px;width:574px;height:36px;background:linear-gradient(90deg,#F6F5EE,#EEECE2 50%,#EAE8DC)"></div>
<svg class="a" style="left:866px;top:81px;" width="62" height="30" viewBox="0 0 62 30"><defs><linearGradient id="bb" x1="0" y1="0" x2="0" y2="1"><stop offset="0" stop-color="#FCFDFE"/><stop offset=".45" stop-color="#D6DEE8"/><stop offset=".55" stop-color="#C4CED8"/><stop offset="1" stop-color="#DDF6FC"/></linearGradient><linearGradient id="bo" x1="0" y1="0" x2="0" y2="1"><stop offset="0" stop-color="#A8A8A8"/><stop offset="1" stop-color="#404040"/></linearGradient></defs><path d="M17 3.2 Q24 2 30 4.5 Q36 2 45 3.2 A13 13 0 0 1 45 28 Q36 29.5 30 27 Q24 29.5 17 28 A13 13 0 0 1 17 3.2Z" fill="#E8EAEC" stroke="#B0B0B0" stroke-width="1.2"/><circle cx="17.2" cy="16.3" r="11.4" fill="url(#bb)" stroke="url(#bo)" stroke-width="1.2"/><circle cx="45.2" cy="16.3" r="11.4" fill="url(#bb)" stroke="url(#bo)" stroke-width="1.2"/><path d="M11 16.3 L17.5 10 V13.8 H24.5 V18.8 H17.5 V22.6Z" fill="#fff" stroke="#B8C0C8" stroke-width=".8"/><path d="M51.4 16.3 L44.9 10 V13.8 H37.9 V18.8 H44.9 V22.6Z" fill="#fff" stroke="#B8C0C8" stroke-width=".8"/></svg>
<svg class="a" style="left:872px;top:118px;" width="17" height="17" viewBox="0 0 17 17"><path d="M8.5 1 L10.8 6 L16 6.4 L12 9.8 L13.3 15 L8.5 12.2 L3.7 15 L5 9.8 L1 6.4 L6.2 6Z" fill="#FFC830" stroke="#C88A10" stroke-width=".8"/></svg>
<svg class="a" style="left:899px;top:118px;" width="18" height="17" viewBox="0 0 18 17"><path d="M10.5 1 L12.3 5 L16.5 5.3 L13.3 8 L14.3 12.3 L10.5 10 L6.7 12.3 L7.7 8 L4.5 5.3 L8.7 5Z" fill="#FFC830" stroke="#C88A10" stroke-width=".8"/><path d="M4 6 V9 H1 V12 H4 V15 H7 V12 H10 V9 H7 V6Z" fill="#3AB83A" stroke="#1A781A" stroke-width=".8"/></svg>
<svg class="a" style="left:930px;top:114px;" width="300" height="30" viewBox="0 0 300 30"><defs><linearGradient id="ti" x1="0" y1="0" x2="0" y2="1"><stop offset="0" stop-color="#FFFFFF"/><stop offset=".35" stop-color="#EAF4FE"/><stop offset=".4" stop-color="#C8E0FA"/><stop offset="1" stop-color="#B6D4F8"/></linearGradient></defs><path d="M0.5 30 V4.5 Q0.5 0.5 4.5 0.5 H293.5 Q297.5 0.5 297.5 4.5 V30" fill="url(#ti)" stroke="#8A96A8"/></svg>
<svg class="a" style="left:935px;top:121px" width="16" height="16" viewBox="0 0 16 16"><defs><mask id="iem935_121"><rect x="0" y="0" width="16" height="16" fill="#fff"/><path d="M10.5 10.2 H16 V14 L11.5 12.5Z" fill="#000"/></mask></defs><g mask="url(#iem935_121)"><circle cx="9.5" cy="9" r="5.9" fill="#2A9CF2" stroke="#0A3590" stroke-width="1.3"/><path d="M6.2 8.3 Q6.8 5.2 9.6 5.2 Q12.4 5.2 12.9 8.3Z" fill="#B4E8FF"/><rect x="5" y="8.3" width="10.5" height="1.9" fill="#0A3590"/><path d="M5.5 11 Q7 14 11 13.5" stroke="#6AD0FF" stroke-width="1" fill="none"/></g><path d="M1.8 14.6 Q-0.5 10.5 5.5 5 Q12 -0.5 14.6 1.4 Q16 2.8 13.8 5.8" stroke="#F2B428" stroke-width="1.5" fill="none"/><path d="M1.8 14.6 Q3.5 16.2 7.5 14.2" stroke="#E8A020" stroke-width="1.3" fill="none"/></svg>
<div class="t" style="left:952px;top:124px;font-size:11px">Blank Page</div>
<svg class="a" style="left:1228px;top:115px;" width="32" height="29" viewBox="0 0 32 29"><defs><linearGradient id="tn" x1="0" y1="0" x2="0" y2="1"><stop offset="0" stop-color="#F4F6FC"/><stop offset=".35" stop-color="#E4E8F4"/><stop offset=".4" stop-color="#C8D0E4"/><stop offset="1" stop-color="#E8ECF8"/></linearGradient></defs><path d="M1.5 29 V4.5 Q1.5 1.5 4.5 1.5 H26.5 Q29.5 1.5 29.5 4.5 V29" fill="url(#tn)" stroke="#8A96A8"/></svg>
<div class="a" style="left:866px;top:142px;width:574px;height:1px;background:#8A96A8"></div>
<div class="a" style="left:866px;top:143px;width:574px;height:3px;background:linear-gradient(#C8E0FA,#E8F2FE)"></div>
<div class="a" style="left:866px;top:146px;width:574px;height:1px;background:#808080"></div>
<div class="a" style="left:866px;top:147px;width:574px;height:618px;background:#fff"></div>
<div class="a" style="left:866px;top:147px;width:1px;height:618px;background:#808080"></div>
<div class="a" style="left:866px;top:764px;width:574px;height:25px;background:linear-gradient(#FFFFFF 0,#FFFFFF 1px,#8C8A80 1px,#B8B6A8 3px,#ECE9D8 4px,#ECE9D8 85%,#DCD8C4 100%)"></div>
<div class="a" style="left:1384px;top:770px;width:1px;height:18px;background:#C8C5B4"></div>
<div class="a" style="left:1385px;top:770px;width:1px;height:18px;background:#fff"></div>
<div class="a" style="left:1408px;top:770px;width:1px;height:18px;background:#C8C5B4"></div>
<div class="a" style="left:1409px;top:770px;width:1px;height:18px;background:#fff"></div>
<div class="a" style="left:1432px;top:770px;width:1px;height:18px;background:#C8C5B4"></div>
<div class="a" style="left:1433px;top:770px;width:1px;height:18px;background:#fff"></div>
<div class="t" style="left:887px;top:61.5px;font-size:12.9px;font-weight:bold;color:#DAE4F8">Blank Page - Windows Internet Explorer</div>
<svg class="a" style="left:868px;top:58px" width="16" height="16" viewBox="0 0 16 16"><defs><mask id="iem868_58"><rect x="0" y="0" width="16" height="16" fill="#fff"/><path d="M10.5 10.2 H16 V14 L11.5 12.5Z" fill="#000"/></mask></defs><g mask="url(#iem868_58)"><circle cx="9.5" cy="9" r="5.9" fill="#2A9CF2" stroke="#0A3590" stroke-width="1.3"/><path d="M6.2 8.3 Q6.8 5.2 9.6 5.2 Q12.4 5.2 12.9 8.3Z" fill="#B4E8FF"/><rect x="5" y="8.3" width="10.5" height="1.9" fill="#0A3590"/><path d="M5.5 11 Q7 14 11 13.5" stroke="#6AD0FF" stroke-width="1" fill="none"/></g><path d="M1.8 14.6 Q-0.5 10.5 5.5 5 Q12 -0.5 14.6 1.4 Q16 2.8 13.8 5.8" stroke="#F2B428" stroke-width="1.5" fill="none"/><path d="M1.8 14.6 Q3.5 16.2 7.5 14.2" stroke="#E8A020" stroke-width="1.3" fill="none"/></svg>
<div class="a" style="left:884px;top:296px;width:566px;height:338px;background:#ECE9D8;border-top:1px solid #F1EFE2;border-left:1px solid #F1EFE2;border-bottom:1px solid #716F64"></div>
<div class="a" style="left:885px;top:297px;width:565px;height:336px;border-top:1px solid #fff;border-left:1px solid #fff;border-bottom:1px solid #ACA899"></div>
<div class="a" style="left:888px;top:300px;width:552px;height:25px;background:#0A58E6"></div>
<svg class="a" style="left:893px;top:306px;" width="15" height="13" viewBox="0 0 15 13"><rect x="0.5" y="0.5" width="14" height="12" fill="#000" stroke="#4A5A78"/><rect x="1" y="1" width="13" height="2" fill="#3A70D0"/><text x="1.5" y="10.5" font-size="7" font-family="Liberation Sans" font-weight="bold" fill="#fff">C:\</text></svg>
<div class="t" style="left:915px;top:305px;font-size:13.6px;font-weight:bold;color:#fff">file:///D:/Works/Testing/SourceControl/Trunk/Src/TestFramework/TestFramework/bin/Debug/TestFramework.exe</div>
<div class="a" style="left:888px;top:326px;width:552px;height:302px;background:#000;border-top:1px solid #ACA899;border-left:1px solid #ACA899"></div>
<div class="a" style="left:889px;top:327px;width:551px;height:1px;background:#716F64"></div>
<div class="t" style="left:890px;top:328px;font-family:Liberation Mono,monospace;font-size:13.33px;font-weight:bold;color:#C0C0C0">20. Search a user page check</div>
</body></html>
